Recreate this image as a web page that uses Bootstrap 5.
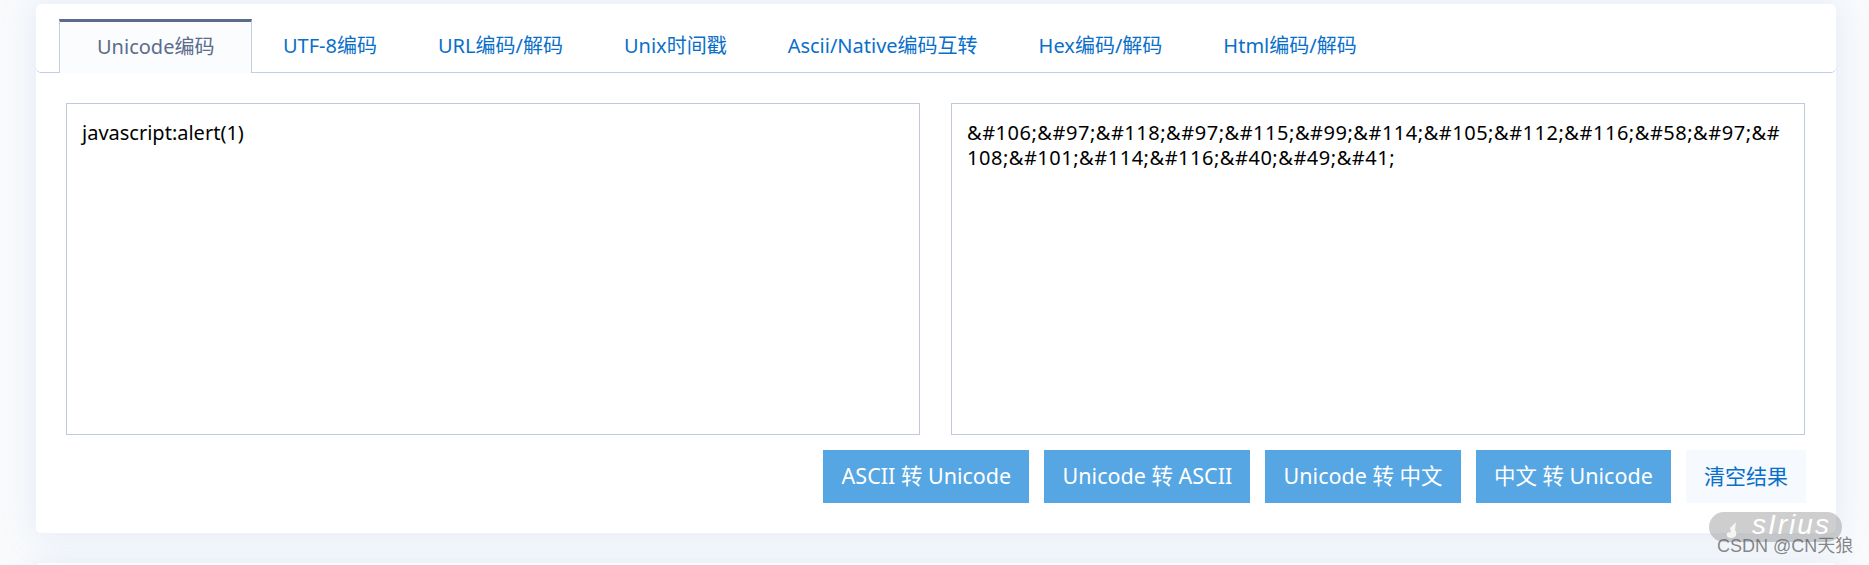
<!DOCTYPE html>
<html lang="zh"><head><meta charset="utf-8">
<title>Unicode编码</title>
<link href="https://cdn.jsdelivr.net/npm/bootstrap@5.3.0/dist/css/bootstrap.min.css" rel="stylesheet">
<style>
html,body{height:565px;overflow:hidden}
body{background:#f8fafc;font-family:"Noto Sans","Noto Sans CJK SC",sans-serif;position:relative}
.tool-wrap{width:1800px;margin:0 0 0 36px;padding-top:4px}
.tool-box{background:#fff;border:0;border-radius:5px;box-shadow:0 0 30px rgba(190,210,235,.35)}
.tool-head{height:69px;padding:15px 0 0 23px;border-bottom:1px solid #c0cfe4;border-radius:5px}
.tool-tabs{border:0;flex-wrap:nowrap}
.tool-tabs .nav-link{border:0;border-radius:0;height:54px;line-height:54px;padding:0 30.5px;font-size:20px;color:#0a6fc9;margin:0;white-space:nowrap}
.tool-tabs .nav-link.active{background:#fbfcfe;color:#5b6b8c;border:1px solid #c0cfe4;border-top:3px solid #5b6b8c;border-bottom:0;padding:0 37px;line-height:49px;height:54px}
.tool-body{padding:30px;height:460px;border-radius:5px}
.tool-text{width:854px;height:332px;border:1px solid #bfcadd;border-radius:0;padding:16px 15px;font-size:20px;line-height:25px;color:#000;background:#fff;resize:none;word-break:break-all;box-shadow:none;flex:none}
.tool-text:focus{border-color:#bfcadd;box-shadow:none}
.tool-text.wide-digits{letter-spacing:.52px}
.tool-btn{height:53px;border:0;border-radius:0;font-size:21.5px;padding:0 18.2px;background:#55a6e3;color:#fff;white-space:nowrap}
.tool-btn:hover{background:#55a6e3;color:#fff}
.tool-btn.plain{background:#f6fafe;color:#0a6fc9;font-size:21px;padding:0 18px}
.area-row{gap:31px}
.btn-row{gap:15px;margin-top:15px}
.next-box{height:30px;margin-top:30px;border-radius:5px 5px 0 0;background:#fff}
.wm-pill{position:absolute;left:1709px;top:512px;width:133px;height:30px;border-radius:15px;background:rgba(120,120,120,.36);color:#fff;font-style:italic;font-size:28px;line-height:25px;padding-left:43px;font-family:"Liberation Sans",sans-serif;letter-spacing:2px;white-space:nowrap}
.wm-pill svg{position:absolute;left:15px;top:8px}
.wm-text{position:absolute;left:1717px;top:537px;font-size:18px;line-height:19px;color:rgba(90,90,90,.72);white-space:nowrap;font-family:"Liberation Sans","Noto Sans CJK SC",sans-serif}
</style></head>
<body>
<div class="tool-wrap">
  <div class="tool-box">
    <div class="tool-head">
      <ul class="nav nav-tabs tool-tabs">
        <li class="nav-item"><a class="nav-link active" href="#">Unicode编码</a></li>
        <li class="nav-item"><a class="nav-link" href="#">UTF-8编码</a></li>
        <li class="nav-item"><a class="nav-link" href="#">URL编码/解码</a></li>
        <li class="nav-item"><a class="nav-link" href="#">Unix时间戳</a></li>
        <li class="nav-item"><a class="nav-link" href="#">Ascii/Native编码互转</a></li>
        <li class="nav-item"><a class="nav-link" href="#">Hex编码/解码</a></li>
        <li class="nav-item"><a class="nav-link" href="#">Html编码/解码</a></li>
      </ul>
    </div>
    <div class="tool-body">
      <div class="d-flex area-row">
        <textarea class="form-control tool-text">javascript:alert(1)</textarea>
        <textarea class="form-control tool-text wide-digits">&amp;#106;&amp;#97;&amp;#118;&amp;#97;&amp;#115;&amp;#99;&amp;#114;&amp;#105;&amp;#112;&amp;#116;&amp;#58;&amp;#97;&amp;#108;&amp;#101;&amp;#114;&amp;#116;&amp;#40;&amp;#49;&amp;#41;</textarea>
      </div>
      <div class="d-flex justify-content-end btn-row">
        <button class="btn tool-btn">ASCII 转 Unicode</button>
        <button class="btn tool-btn">Unicode 转 ASCII</button>
        <button class="btn tool-btn">Unicode 转 中文</button>
        <button class="btn tool-btn">中文 转 Unicode</button>
        <button class="btn tool-btn plain">清空结果</button>
      </div>
    </div>
  </div>
  <div class="tool-box next-box"></div>
</div>
<div class="wm-pill"><svg width="18" height="20" viewBox="0 0 18 20"><path d="M12 2 L11 10 C14 14 12 18 7 18 C3 18 2 15 3 13 L7 12 L6 8 Z" fill="#fff" opacity=".8"/></svg>sIrius</div>
<div class="wm-text">CSDN @CN天狼</div>
<script src="https://cdn.jsdelivr.net/npm/bootstrap@5.3.0/dist/js/bootstrap.bundle.min.js"></script>
</body></html>
